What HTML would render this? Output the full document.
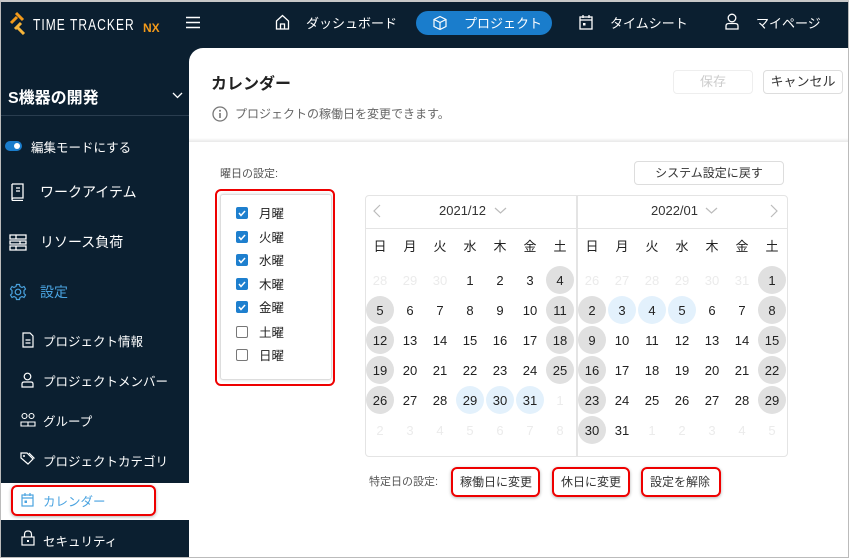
<!DOCTYPE html>
<html><head><meta charset="utf-8"><style>
*{box-sizing:border-box;margin:0;padding:0}
body{width:849px;height:558px;overflow:hidden;background:#0b1f30;font-family:"Liberation Sans","Noto Sans CJK JP",sans-serif;position:relative;color:#222}
.a{position:absolute}
.frame{position:absolute;left:0;top:0;width:849px;height:558px;border:1px solid #bbb;border-top:2px solid #c8c8c8;pointer-events:none;z-index:9}
.nav{color:#fff;font-size:13px}
.sb{color:#fff;position:absolute;left:0;width:189px}
.panel{position:absolute;left:189px;top:48px;width:660px;height:510px;background:#fff;border-top-left-radius:14px}
.btn{position:absolute;border:1px solid #ddd;border-radius:4px;background:#fff;font-size:12px;text-align:center;color:#333}
.red{position:absolute;border:2px solid #e00;border-radius:6px;box-shadow:0 1px 3px rgba(0,0,0,.3)}
.cal{position:absolute;left:365px;top:195px;width:423px;height:262px;border:1px solid #e4e4e4;border-radius:4px}
.grid{position:absolute;display:grid;grid-template-columns:repeat(7,30px);grid-auto-rows:30px;font-size:13px}
.grid span{display:flex;align-items:center;justify-content:center;width:28px;height:28px;margin:1px;border-radius:50%;color:#222}
.grid .f{color:#ebebeb}.grid .g{background:#e0e0e0}.grid .b{background:#e3f1fc}
.wk{position:absolute;display:grid;grid-template-columns:repeat(7,30px);font-size:13px;text-align:center;color:#222}
.cb{position:absolute;left:236px;width:12px;height:12px;border-radius:2px;background:#1e7fce}
.cb.o{background:#fff;border:1.5px solid #777}
.cbl{position:absolute;left:259px;font-size:12.5px;color:#222}
.sub{font-size:12.5px}
</style></head><body>
<!-- header -->
<svg class="a" style="left:8px;top:11px" width="22" height="24" viewBox="0 0 22 24"><g stroke-width="3" fill="none"><path d="M8 2 L15 9" stroke="#f39a1a"/><path d="M3 12 L9 6" stroke="#f39a1a"/><path d="M13 12 L7 18" stroke="#f7b53a"/><path d="M9 16 L16 23" stroke="#f7b53a"/></g></svg>
<div class="a" style="left:33px;top:17px;color:#fff;font-size:16px;letter-spacing:1.4px;transform:scaleX(.75);transform-origin:left">TIME TRACKER</div>
<div class="a" style="left:143px;top:21px;color:#f39a1a;font-size:12px;font-weight:bold">NX</div>
<svg class="a" style="left:186px;top:16px" width="15" height="13"><path d="M0 1.5H14M0 6.5H14M0 11.5H14" stroke="#fff" stroke-width="1.6"/></svg>
<svg class="a" style="left:275px;top:14px" width="15" height="16" viewBox="0 0 15 16"><path d="M1.5 7 L7.5 1.5 L13.5 7 V15 H1.5 Z M5.5 15 V10 H9.5 V15" fill="none" stroke="#fff" stroke-width="1.3"/></svg>
<div class="a nav" style="left:306px;top:13px">ダッシュボード</div>
<div class="a" style="left:416px;top:11px;width:136px;height:24px;border-radius:12px;background:#1a7dcc"></div>
<svg class="a" style="left:432px;top:15px" width="16" height="16" viewBox="0 0 16 16"><path d="M8 1.5 L14 4.5 V11.5 L8 14.5 L2 11.5 V4.5 Z M2 4.5 L8 7.5 L14 4.5 M8 7.5 V14.5" fill="none" stroke="#fff" stroke-width="1.2"/></svg>
<div class="a nav" style="left:464px;top:13px">プロジェクト</div>
<svg class="a" style="left:579px;top:14px" width="14" height="16" viewBox="0 0 14 16"><rect x="1" y="3" width="12" height="12" fill="none" stroke="#fff" stroke-width="1.3"/><path d="M1 6H13M4 1V4M10 1V4" stroke="#fff" stroke-width="1.3"/><rect x="4" y="9" width="2.5" height="2.5" fill="#fff"/></svg>
<div class="a nav" style="left:610px;top:13px">タイムシート</div>
<svg class="a" style="left:725px;top:13px" width="14" height="17" viewBox="0 0 14 17"><circle cx="7" cy="5" r="3.8" fill="none" stroke="#fff" stroke-width="1.3"/><path d="M1 16 V13 Q1 10.5 4 10.5 H10 Q13 10.5 13 13 V16 Z" fill="none" stroke="#fff" stroke-width="1.3"/></svg>
<div class="a nav" style="left:756px;top:13px">マイページ</div>

<!-- sidebar -->
<div class="sb" style="left:8px;top:84px;font-size:16px;font-weight:bold">S機器の開発</div>
<svg class="a" style="left:172px;top:92px" width="11" height="7"><path d="M1 1L5.5 5.5L10 1" stroke="#fff" fill="none" stroke-width="1.3"/></svg>
<div class="a" style="left:0;top:115px;width:189px;height:1px;background:#2a3d4f"></div>
<div class="a" style="left:5px;top:141px;width:17px;height:10px;border-radius:5px;background:#1a7dcc"></div>
<div class="a" style="left:14px;top:143px;width:6px;height:6px;border-radius:3px;background:#fff"></div>
<div class="sb" style="left:31px;top:137px;font-size:12.5px">編集モードにする</div>
<svg class="a" style="left:10px;top:183px" width="15" height="18" viewBox="0 0 15 18"><path d="M2 1H13V15H3.5Q2 15 2 16.5Q2 17.5 3.5 17.5H13M2 1V16.5M6 5H10M6 8H10" fill="none" stroke="#fff" stroke-width="1.3"/></svg>
<div class="sb" style="left:40px;top:182px;font-size:14px">ワークアイテム</div>
<svg class="a" style="left:9px;top:234px" width="18" height="17" viewBox="0 0 18 17"><path d="M1 1H17V5H1ZM1 7H17V10H1ZM1 12H17V16H1ZM7 1V5M11 7V10M7 12V16" fill="none" stroke="#fff" stroke-width="1.3"/></svg>
<div class="sb" style="left:40px;top:232px;font-size:14px">リソース負荷</div>
<svg class="a" style="left:9px;top:283px" width="18" height="18" viewBox="0 0 18 18"><circle cx="9" cy="9" r="2.8" fill="none" stroke="#4aa3e0" stroke-width="1.2"/><path d="M7.5 1.5H10.5L11 3.5L13 4.5L15 3.5L16.5 6L15 7.5V10.5L16.5 12L15 14.5L13 13.5L11 14.5L10.5 16.5H7.5L7 14.5L5 13.5L3 14.5L1.5 12L3 10.5V7.5L1.5 6L3 3.5L5 4.5L7 3.5Z" fill="none" stroke="#4aa3e0" stroke-width="1.2"/></svg>
<div class="sb" style="left:40px;top:282px;font-size:14px;color:#4aa3e0">設定</div>
<svg class="a" style="left:22px;top:332px" width="12" height="16" viewBox="0 0 12 16"><path d="M1 1H8L11 4V15H1ZM3.5 8H8.5M3.5 11H8.5" fill="none" stroke="#fff" stroke-width="1.2"/></svg>
<div class="sb sub" style="left:43px;top:331px">プロジェクト情報</div>
<svg class="a" style="left:21px;top:372px" width="13" height="16" viewBox="0 0 13 16"><circle cx="6.5" cy="4.5" r="3.3" fill="none" stroke="#fff" stroke-width="1.2"/><path d="M1 15V12Q1 10 3 10H10Q12 10 12 12V15Z" fill="none" stroke="#fff" stroke-width="1.2"/></svg>
<div class="sb sub" style="left:43px;top:371px">プロジェクトメンバー</div>
<svg class="a" style="left:20px;top:412px" width="16" height="15" viewBox="0 0 16 15"><circle cx="4.5" cy="4" r="2.5" fill="none" stroke="#fff" stroke-width="1.1"/><circle cx="11.5" cy="4" r="2.5" fill="none" stroke="#fff" stroke-width="1.1"/><path d="M1 14V10H8V14ZM8 14V10H15V14Z" fill="none" stroke="#fff" stroke-width="1.1"/></svg>
<div class="sb sub" style="left:43px;top:411px">グループ</div>
<svg class="a" style="left:20px;top:452px" width="16" height="14" viewBox="0 0 16 14"><path d="M1 1H7L13 7L8 12L1 6Z M9 1L14.5 6.5" fill="none" stroke="#fff" stroke-width="1.2"/><circle cx="4" cy="4" r="1" fill="#fff"/></svg>
<div class="sb sub" style="left:43px;top:451px">プロジェクトカテゴリ</div>
<div class="a" style="left:0;top:483px;width:189px;height:37px;background:#fff"></div>
<div class="red" style="left:11px;top:485px;width:145px;height:31px"></div>
<svg class="a" style="left:21px;top:492px" width="13" height="15" viewBox="0 0 13 15"><rect x="1" y="3" width="11" height="11" fill="none" stroke="#4aa3e0" stroke-width="1.2"/><path d="M1 6H12M4 1V4M9 1V4" stroke="#4aa3e0" stroke-width="1.2"/><rect x="3.5" y="8.5" width="2.5" height="2.5" fill="#4aa3e0"/></svg>
<div class="a sub" style="left:43px;top:491px;color:#4aa3e0">カレンダー</div>
<svg class="a" style="left:21px;top:530px" width="14" height="16" viewBox="0 0 14 16"><rect x="1" y="7" width="12" height="8" fill="none" stroke="#fff" stroke-width="1.2"/><path d="M3.5 7V4.5Q3.5 1 7 1Q10.5 1 10.5 4.5V7" fill="none" stroke="#fff" stroke-width="1.2"/><rect x="6" y="10" width="2" height="2" fill="#fff"/></svg>
<div class="sb sub" style="left:43px;top:531px">セキュリティ</div>

<!-- panel -->
<div class="panel"></div>
<div class="a" style="left:189px;top:138px;width:660px;height:4px;background:linear-gradient(#fff,#e8e8e8)"></div>
<div class="a" style="left:211px;top:70px;font-size:16px;font-weight:bold;color:#222">カレンダー</div>
<svg class="a" style="left:212px;top:106px" width="16" height="16"><circle cx="8" cy="8" r="7" fill="none" stroke="#777" stroke-width="1.3"/><path d="M8 7V12" stroke="#777" stroke-width="1.6"/><circle cx="8" cy="4.7" r="1" fill="#777"/></svg>
<div class="a" style="left:235px;top:105px;font-size:12px;color:#666">プロジェクトの稼働日を変更できます。</div>
<div class="btn" style="left:673px;top:70px;width:80px;height:24px;line-height:22px;color:#ccc;border-color:#eee;font-size:13px">保存</div>
<div class="btn" style="left:763px;top:70px;width:80px;height:24px;line-height:22px;font-size:13px">キャンセル</div>
<div class="a" style="left:220px;top:165px;font-size:11px;color:#555">曜日の設定:</div>
<div class="btn" style="left:634px;top:161px;width:150px;height:24px;line-height:22px">システム設定に戻す</div>

<div class="a" style="left:220px;top:194px;width:112px;height:186px;border:1px solid #ddd;border-radius:3px;box-shadow:0 0 3px rgba(0,0,0,.15)"></div>
<div class="red" style="left:215px;top:189px;width:120px;height:197px;box-shadow:none"></div>
<div class="cb" style="top:207px"></div><div class="cbl" style="top:203px">月曜</div>
<div class="cb" style="top:231px"></div><div class="cbl" style="top:227px">火曜</div>
<div class="cb" style="top:254px"></div><div class="cbl" style="top:250px">水曜</div>
<div class="cb" style="top:278px"></div><div class="cbl" style="top:274px">木曜</div>
<div class="cb" style="top:301px"></div><div class="cbl" style="top:297px">金曜</div>
<div class="cb o" style="top:326px"></div><div class="cbl" style="top:322px">土曜</div>
<div class="cb o" style="top:349px"></div><div class="cbl" style="top:345px">日曜</div>
<svg class="a" style="left:236px;top:207px" width="12" height="120"><g fill="none" stroke="#fff" stroke-width="1.5"><path d="M3 6L5 8.5L9 4"/><path d="M3 30L5 32.5L9 28"/><path d="M3 53L5 55.5L9 51"/><path d="M3 77L5 79.5L9 75"/><path d="M3 100L5 102.5L9 98"/></g></svg>

<div class="cal"></div>
<div class="a" style="left:576px;top:196px;width:2px;height:260px;background:#e4e4e4"></div>
<div class="a" style="left:366px;top:228px;width:421px;height:1px;background:#e4e4e4"></div>
<svg class="a" style="left:372px;top:204px" width="10" height="14"><path d="M8 1L2 7L8 13" stroke="#bbb" fill="none" stroke-width="1.2"/></svg>
<svg class="a" style="left:769px;top:204px" width="10" height="14"><path d="M2 1L8 7L2 13" stroke="#bbb" fill="none" stroke-width="1.2"/></svg>
<div class="a" style="left:439px;top:203px;font-size:13px;color:#333">2021/12</div>
<svg class="a" style="left:494px;top:207px" width="13" height="8"><path d="M1 1L6.5 6L12 1" stroke="#bbb" fill="none" stroke-width="1.2"/></svg>
<div class="a" style="left:651px;top:203px;font-size:13px;color:#333">2022/01</div>
<svg class="a" style="left:705px;top:207px" width="13" height="8"><path d="M1 1L6.5 6L12 1" stroke="#bbb" fill="none" stroke-width="1.2"/></svg>
<div class="wk" style="left:365px;top:236px"><span>日</span><span>月</span><span>火</span><span>水</span><span>木</span><span>金</span><span>土</span></div>
<div class="wk" style="left:577px;top:236px"><span>日</span><span>月</span><span>火</span><span>水</span><span>木</span><span>金</span><span>土</span></div>
<div class="grid" style="left:365px;top:265px">
<span class="f">28</span><span class="f">29</span><span class="f">30</span><span>1</span><span>2</span><span>3</span><span class="g">4</span>
<span class="g">5</span><span>6</span><span>7</span><span>8</span><span>9</span><span>10</span><span class="g">11</span>
<span class="g">12</span><span>13</span><span>14</span><span>15</span><span>16</span><span>17</span><span class="g">18</span>
<span class="g">19</span><span>20</span><span>21</span><span>22</span><span>23</span><span>24</span><span class="g">25</span>
<span class="g">26</span><span>27</span><span>28</span><span class="b">29</span><span class="b">30</span><span class="b">31</span><span class="f">1</span>
<span class="f">2</span><span class="f">3</span><span class="f">4</span><span class="f">5</span><span class="f">6</span><span class="f">7</span><span class="f">8</span>
</div>
<div class="grid" style="left:577px;top:265px">
<span class="f">26</span><span class="f">27</span><span class="f">28</span><span class="f">29</span><span class="f">30</span><span class="f">31</span><span class="g">1</span>
<span class="g">2</span><span class="b">3</span><span class="b">4</span><span class="b">5</span><span>6</span><span>7</span><span class="g">8</span>
<span class="g">9</span><span>10</span><span>11</span><span>12</span><span>13</span><span>14</span><span class="g">15</span>
<span class="g">16</span><span>17</span><span>18</span><span>19</span><span>20</span><span>21</span><span class="g">22</span>
<span class="g">23</span><span>24</span><span>25</span><span>26</span><span>27</span><span>28</span><span class="g">29</span>
<span class="g">30</span><span>31</span><span class="f">1</span><span class="f">2</span><span class="f">3</span><span class="f">4</span><span class="f">5</span>
</div>

<div class="a" style="left:369px;top:473px;font-size:11px;color:#555">特定日の設定:</div>
<div class="red" style="left:451px;top:467px;width:89px;height:30px"></div>
<div class="a" style="left:460px;top:473px;font-size:12px;color:#333">稼働日に変更</div>
<div class="red" style="left:552px;top:467px;width:78px;height:30px"></div>
<div class="a" style="left:561px;top:473px;font-size:12px;color:#333">休日に変更</div>
<div class="red" style="left:641px;top:467px;width:80px;height:30px"></div>
<div class="a" style="left:650px;top:473px;font-size:12px;color:#333">設定を解除</div>
<div class="frame"></div>
</body></html>
